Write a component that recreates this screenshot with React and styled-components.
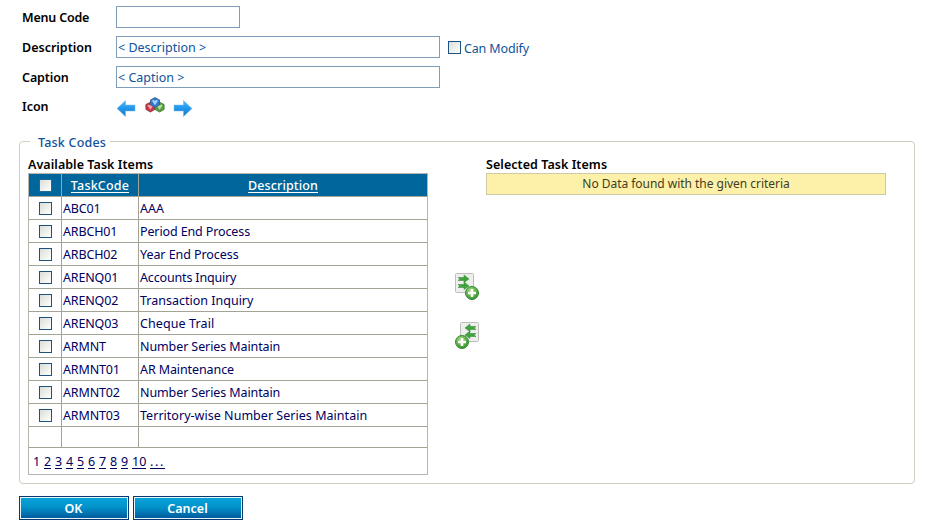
import React from "react";
import styled, { createGlobalStyle, css } from "styled-components";

const GlobalStyle = createGlobalStyle`
  * { box-sizing: border-box; }
  body { margin: 0; background: #fff; font: 12.5px/16px "Noto Sans", "Open Sans", sans-serif; color: #000; }
`;

const Page = styled.main`
  width: 932px;
  height: 531px;
  padding: 6px 17px 0 19px;
  overflow: hidden;
`;

const Field = styled.div`
  display: grid;
  grid-template-columns: 94px auto auto 1fr;
  height: 30px;
  padding-left: 3px;
`;

const Text = styled.span`
  white-space: pre;
  letter-spacing: ${(p) => p.$ls || 0}px;
`;

const FieldLabel = styled(Text)`
  font-weight: 600;
  padding-top: ${(p) => (p.$top || 4)}px;
`;

const Input = styled.div`
  width: ${(p) => p.$w}px;
  height: 22px;
  padding: 3px 1px 0;
  border: 1px solid #7d9db9;
  color: #0e539c;
`;

const CheckSquare = styled.span`
  display: block;
  width: 13px;
  height: 13px;
  border: 1px solid ${(p) => (p.$header ? "#1c6b95" : "#1c5180")};
  background: linear-gradient(135deg, #dcdcd7, #fff);
`;

const ModifyOption = styled.div`
  display: flex;
  gap: 3px;
  padding: 5px 0 0 8px;
  color: #0e539c;
`;

const IconPicker = styled.div`
  display: flex;
  gap: 8.5px;
  svg { display: block; }
`;

const Group = styled.section`
  height: 343px;
  margin-top: 15px;
  padding: 0 8px;
  border: 1px solid #cfcfc1;
  border-radius: 4px;
`;

const Legend = styled.h2`
  width: 80px;
  height: 16px;
  margin: -7px 0 6px 2px;
  padding-left: 8px;
  background: #fff;
  color: #0e539c;
  font: inherit;
  font-weight: 500;
`;

const Panels = styled.div`
  display: grid;
  grid-template-columns: 400px 58px 400px;
`;

const PanelTitle = styled.h3`
  height: 16px;
  margin: 0;
  font: inherit;
  font-weight: 600;
`;

const Table = styled.div`
  width: 400px;
  height: 302px;
  border: 1px solid #b5b5ae;
`;

const Row = styled.div`
  display: grid;
  grid-template-columns: 33px 77px 1fr;
  height: ${(p) => p.$h || 23}px;
  border-bottom: 1px solid #a3a396;
  color: #00005f;
  ${(p) => p.$header && css`
    background: #00669b;
    color: #fff;
    font-weight: 500;
    text-align: center;
  `}
`;

const Cell = styled.div`
  padding: ${(p) => (p.$header ? "4px 0 0" : "4px 0 0 1px")};
  border-right: 1px solid #a3a396;
  &:last-child { border-right: 0; }
`;

const CheckCell = styled(Cell)`
  padding: 5px 0 0 10px;
`;

const HeaderLink = styled(Text)`
  display: inline-block;
  height: 15px;
  border-bottom: 1px solid #fff;
`;

const Pager = styled.nav`
  display: flex;
  gap: 4px;
  padding: 6px 0 0 4px;
  color: #00005f;
`;

const PageNumber = styled.span`
  height: 15px;
  width: ${(p) => p.$w || 7}px;
  text-align: center;
  letter-spacing: ${(p) => p.$ls || 0}px;
  border-bottom: 1px solid ${(p) => (p.$current ? "transparent" : "#00005f")};
`;

const Transfers = styled.div`
  display: flex;
  flex-direction: column;
  gap: 21px;
  padding: 116px 0 0 27px;
`;

const Notice = styled.div`
  height: 22px;
  padding-top: 2px;
  border: 1px solid #cfc9a6;
  background: #fdf1a9;
  color: #403d24;
  font-size: 12px;
  text-align: center;
`;

const Actions = styled.div`
  display: flex;
  gap: 4px;
  padding-top: 12px;
`;

const Button = styled.button`
  width: 110px;
  height: 24px;
  padding: 1px 1px 0 0;
  border: 1px solid #063a6d;
  box-shadow: inset 0 0 0 1px #e6f5fb;
  background: linear-gradient(#08a4da, #0293cb 45%, #00569a);
  color: #fff;
  font: inherit;
  font-weight: 600;
`;

function Arrow({ right }) {
  return (
    <svg width="20" height="22" viewBox="0 0 20 22">
      <defs>
        <linearGradient id="blueArrow" x1="0" y1="0" x2="0" y2="1">
          <stop offset="0" stopColor="#4db8ff" />
          <stop offset=".5" stopColor="#2196ec" />
          <stop offset="1" stopColor="#2478b8" />
        </linearGradient>
      </defs>
      <path
        d="M1 12.5 9.5 4.5V9H19V15H9.5V20.5Z"
        fill="url(#blueArrow)"
        stroke="#73b9e6"
        strokeWidth=".5"
        transform={right ? "matrix(-1 0 0 1 20 0)" : undefined}
      />
    </svg>
  );
}

function Gem({ x, y, fill, edge, light }) {
  return (
    <g transform={`translate(${x} ${y})`}>
      <path d="M0-4.8 4.5-2.5V2.4L0 5-4.5 2.4V-2.5Z" fill={fill} stroke={edge} strokeWidth=".8" />
      <path d="M-3-1.8Q-1.5-3 0-1.4 1.5-3 3-1.8L0 2.8Z" fill={light} />
    </g>
  );
}

function Gems() {
  return (
    <svg width="20" height="22" viewBox="0 0 20 22">
      <Gem x={5.4} y={11} fill="#d23548" edge="#81313b" light="#f2a3ad" />
      <Gem x={14.6} y={11} fill="#58a344" edge="#3f6c34" light="#b2df9b" />
      <Gem x={10} y={6.4} fill="#3479cd" edge="#34588a" light="#a5d8ff" />
    </svg>
  );
}

function Transfer({ left }) {
  const cx = left ? 7 : 17;
  return (
    <svg width="25" height="28" viewBox="0 0 25 28">
      <defs>
        <radialGradient id="greenBall" cx=".4" cy=".3" r=".7">
          <stop offset="0" stopColor="#a0dc79" />
          <stop offset="1" stopColor="#36942f" />
        </radialGradient>
      </defs>
      <rect x={left ? 5.5 : 0.5} y=".5" width="18" height="19" rx="1" fill="#eeeeed" stroke="#bdbdbc" />
      <g transform={left ? "matrix(-1 0 0 1 24 0)" : undefined} fill="#40a33c" stroke="#2a852c" strokeWidth=".5">
        <path d="M3 4.5H9V2L14 6 9 9.5V7.5H3L5 6Z" />
        <path d="M3 11.5H9V9L14 13 9 16.5V14.5H3L5 13Z" />
      </g>
      <circle cx={cx} cy="20" r="6.5" fill="url(#greenBall)" stroke="#338a34" />
      <path d={`M${cx - 4} 20H${cx + 4}M${cx} 16V24`} stroke="#fff" strokeWidth="2.6" />
    </svg>
  );
}

const tasks = [
  ["ABC01", "AAA"],
  ["ARBCH01", "Period End Process", -0.12],
  ["ARBCH02", "Year End Process", -0.06],
  ["ARENQ01", "Accounts Inquiry", -0.16],
  ["ARENQ02", "Transaction Inquiry"],
  ["ARENQ03", "Cheque Trail", 0.1],
  ["ARMNT", "Number Series Maintain", -0.1],
  ["ARMNT01", "AR Maintenance", -0.1],
  ["ARMNT02", "Number Series Maintain", -0.1],
  ["ARMNT03", "Territory-wise Number Series Maintain", 0.03],
];

export default function App() {
  return (
    <>
      <GlobalStyle />
      <Page>
        <Field><FieldLabel $ls={-0.2}>Menu Code</FieldLabel><Input $w={124} /></Field>
        <Field>
          <FieldLabel>Description</FieldLabel>
          <Input $w={324}><Text>{"< Description >"}</Text></Input>
          <ModifyOption><CheckSquare /><Text $ls={-0.15}>Can Modify</Text></ModifyOption>
        </Field>
        <Field><FieldLabel $ls={-0.1}>Caption</FieldLabel><Input $w={324}><Text>{"< Caption >"}</Text></Input></Field>
        <Field>
          <FieldLabel $top={3}>Icon</FieldLabel>
          <IconPicker><Arrow /><Gems /><Arrow right /></IconPicker>
        </Field>

        <Group>
          <Legend><Text $ls={0.2}>Task Codes</Text></Legend>
          <Panels>
            <div>
              <PanelTitle><Text $ls={0.05}>Available Task Items</Text></PanelTitle>
              <Table>
                <Row $header>
                  <CheckCell><CheckSquare $header /></CheckCell>
                  <Cell $header><HeaderLink $ls={0.2}>TaskCode</HeaderLink></Cell>
                  <Cell $header><HeaderLink $ls={0.15}>Description</HeaderLink></Cell>
                </Row>
                {tasks.map(([code, name, spacing]) => (
                  <Row key={code}>
                    <CheckCell><CheckSquare /></CheckCell>
                    <Cell><Text $ls={-0.15}>{code}</Text></Cell>
                    <Cell><Text $ls={spacing}>{name}</Text></Cell>
                  </Row>
                ))}
                <Row $h={21}><Cell /><Cell /><Cell /></Row>
                <Pager>
                  <PageNumber $current>1</PageNumber>
                  {[2, 3, 4, 5, 6, 7, 8, 9].map((n) => <PageNumber key={n}>{n}</PageNumber>)}
                  <PageNumber $w={14}>10</PageNumber>
                  <PageNumber $w={15} $ls={1.6}>...</PageNumber>
                </Pager>
              </Table>
            </div>
            <Transfers><Transfer /><Transfer left /></Transfers>
            <div>
              <PanelTitle><Text $ls={0.05}>Selected Task Items</Text></PanelTitle>
              <Notice><Text $ls={-0.03}>No Data found with the given criteria</Text></Notice>
            </div>
          </Panels>
        </Group>
        <Actions><Button>OK</Button><Button>Cancel</Button></Actions>
      </Page>
    </>
  );
}
